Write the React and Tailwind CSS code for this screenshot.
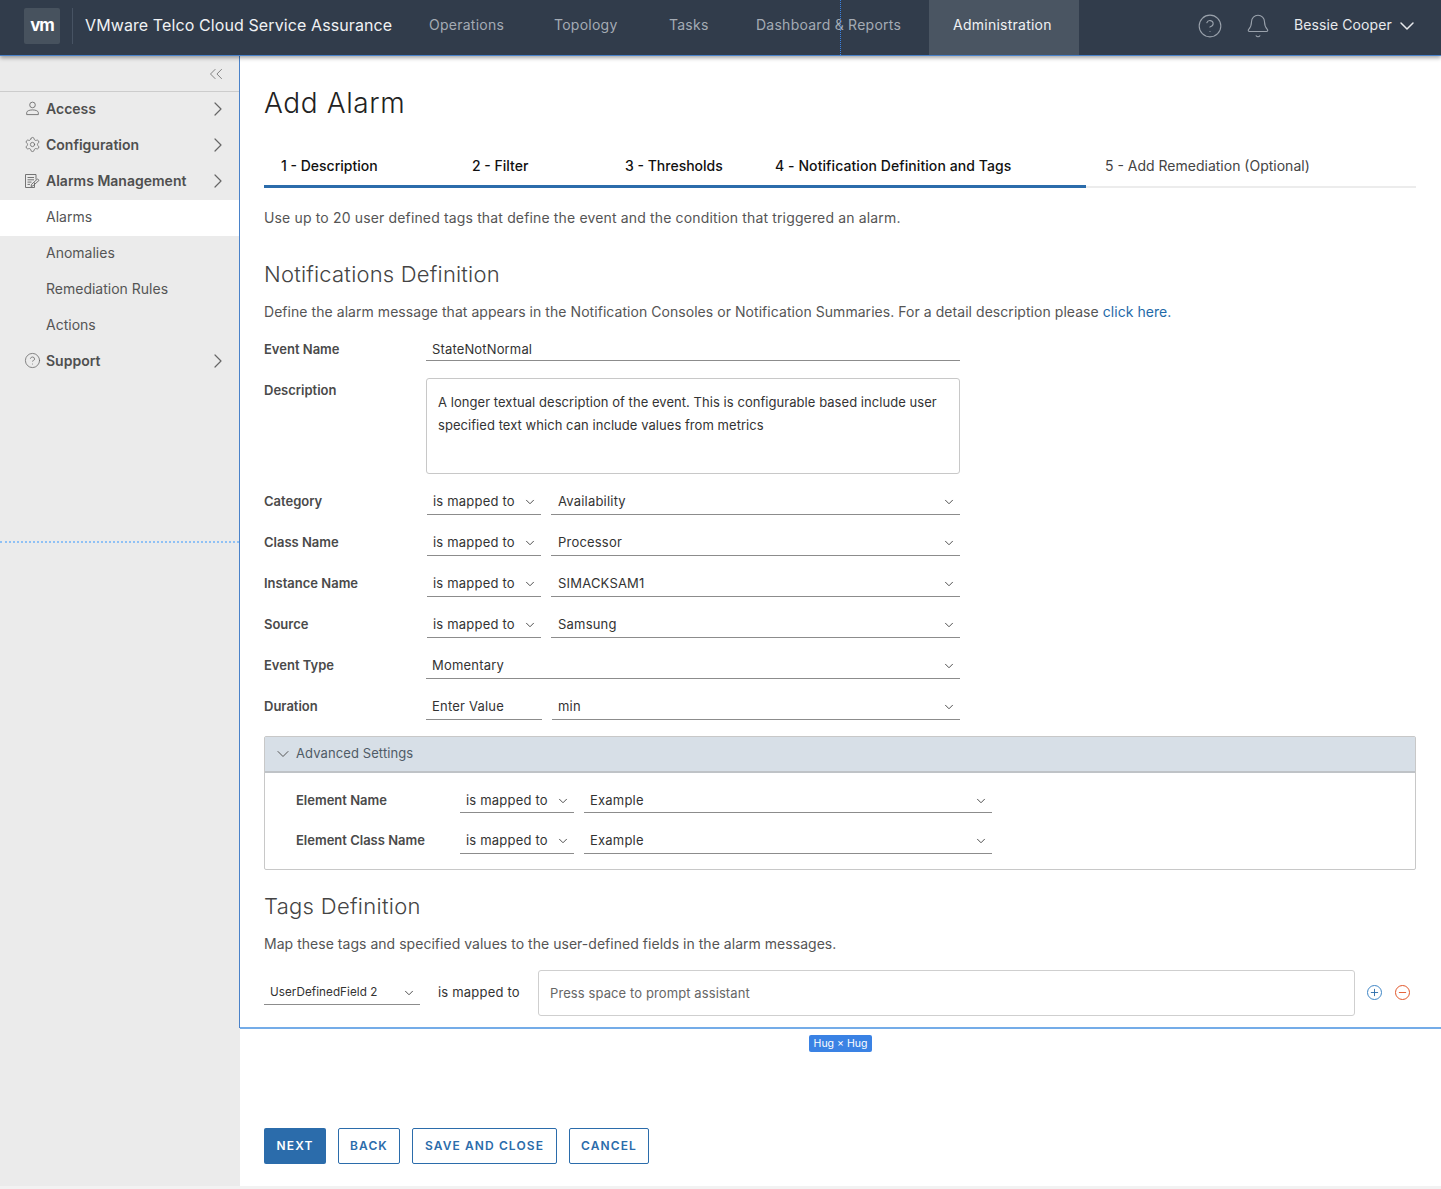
import { ChevronDown, ChevronRight, ChevronsLeft, CircleHelp, Bell, Settings, Plus, Minus } from "lucide-react";

const NAV = ["Operations", "Topology", "Tasks", "Dashboard & Reports"];

const UserIcon = () => (
  <svg viewBox="0 0 16 16" className="w-[15px] h-[15px] text-[#666666]" fill="none" stroke="currentColor" strokeWidth="0.9">
    <circle cx="8" cy="4.2" r="3" />
    <path d="M1.8 14.5v-2.2c0-1.5 2.6-2.8 6.2-2.8s6.2 1.3 6.2 2.8v2.2z" />
  </svg>
);

const AlarmIcon = () => (
  <svg viewBox="0 0 16 16" className="w-[16px] h-[16px] text-[#666666]" fill="none" stroke="currentColor" strokeWidth="0.9">
    <path d="M10.5 9.5v5H1.5V1.5h10.5v5" />
    <path d="M3.5 4.5h6.5M3.5 6.8h6.5M3.5 9.1h4M3.5 11.4h2.5" />
    <path d="M7 13.5l.6-2.2 6-5.4 1.4 1.5-6 5.4z" />
  </svg>
);

const GearIcon = () => <Settings className="w-[17px] h-[17px] text-[#666666]" strokeWidth={1.1} />;
const HelpIcon = () => <CircleHelp className="w-[17px] h-[17px] text-[#666666]" strokeWidth={1.1} />;

const Label = ({ children, className = "w-[162px]" }) => (
  <div className={`${className} shrink-0 text-[13px] font-semibold text-[#4a4a4a]`}>{children}</div>
);

const Select = ({ value, className = "", left = "pl-[6px]", top = "pt-[2px]", text = "text-[13px] tracking-[0.2px]" }) => (
  <div className={`flex items-center justify-between h-[27px] border-b border-[#8c8c8c] ${top} ${left} pr-[4px] text-[#333333] ${text} ${className}`}>
    <span className="whitespace-nowrap">{value}</span>
    <ChevronDown className="w-[14px] h-[14px] shrink-0 text-[#444444]" strokeWidth={1.6} />
  </div>
);

const MappedRow = ({ label, value, labelWidth = "w-[163px]", valueLeft = "pl-[7px]", top, className = "" }) => (
  <div className={`flex items-center ${className}`}>
    <Label className={labelWidth}>{label}</Label>
    <Select value="is mapped to" top={top} className="w-[114px]" />
    <Select value={value} top={top} left={valueLeft} className="ml-[10px] flex-1" />
  </div>
);

const SideItem = ({ icon: Icon, label }) => (
  <div className="flex items-center h-9 pb-[3px] pl-[21px] pr-[9px] text-[#4f4f4f]">
    <div className="flex items-center justify-center w-[22px] shrink-0">
      <Icon />
    </div>
    <span className="ml-[3px] flex-1 text-[14px] font-semibold">{label}</span>
    <ChevronRight className="w-[24px] h-[24px] text-[#666666]" strokeWidth={1.2} />
  </div>
);

const SubItem = ({ label, active }) => (
  <div className={`flex items-center h-9 pb-[4px] pl-[46px] text-[14px] text-[#555555] ${active ? "bg-white" : ""}`}>{label}</div>
);

export default function App() {
  return (
    <div className="relative w-[1441px] h-[1189px] overflow-hidden bg-white font-['Inter','Liberation_Sans',sans-serif] flex flex-col">
      {/* Header */}
      <header className="relative z-10 flex items-center h-[56px] shrink-0 bg-[#313c4b] border-b border-[#4a82c9] shadow-[0_2px_4px_rgba(0,0,0,0.35)]">
        <div className="ml-[24px] mb-[3px] flex items-center justify-center w-[36px] h-[36px] rounded-[2px] bg-[#47525e] text-white text-[17px] font-bold tracking-[-1px]">
          vm
        </div>
        <div className="ml-[12px] mb-[3px] w-px h-[36px] bg-[#475363]" />
        <div className="ml-[12px] mb-[6px] w-[319px] text-[16px] tracking-[0.1px] text-[#f0f2f4] whitespace-nowrap">VMware Telco Cloud Service Assurance</div>
        <nav className="flex h-[55px] items-center text-[14px] tracking-[0.25px]">
          <div className="ml-[25px] w-[125px] pb-[6px] text-[#a4abb4] whitespace-nowrap">{NAV[0]}</div>
          <div className="w-[115px] pb-[6px] text-[#a4abb4] whitespace-nowrap">{NAV[1]}</div>
          <div className="w-[87px] pb-[6px] text-[#a4abb4] whitespace-nowrap">{NAV[2]}</div>
          <div className="w-[173px] pb-[6px] text-[#a4abb4] whitespace-nowrap">{NAV[3]}</div>
          <div className="flex items-center w-[150px] h-full pb-[6px] pl-[24px] bg-[#4a5562] text-[#f0f2f4] whitespace-nowrap">Administration</div>
        </nav>
        <CircleHelp className="ml-[118px] mb-[3px] w-[26px] h-[26px] text-[#9aa2ac]" strokeWidth={1} />
        <Bell className="ml-[22px] mb-[3px] w-[26px] h-[26px] text-[#9aa2ac]" strokeWidth={1} />
        <span className="ml-[23px] mb-[6px] text-[14px] tracking-[0.1px] text-[#e8eaed] whitespace-nowrap">Bessie Cooper</span>
        <ChevronDown className="ml-[3px] mb-[3px] w-[24px] h-[24px] text-[#e8eaed]" strokeWidth={1.5} />
      </header>

      <div className="flex flex-1">
        {/* Sidebar */}
        <aside className="w-[240px] shrink-0 bg-[#ebebeb] border-r border-[#4a82c9] h-[973px] self-start">
          <div className="flex items-center justify-end h-[36px] pr-[12px] border-b border-[#cccccc]">
            <ChevronsLeft className="w-[22px] h-[22px] text-[#777777]" strokeWidth={1} />
          </div>
          <SideItem icon={UserIcon} label="Access" />
          <SideItem icon={GearIcon} label="Configuration" />
          <SideItem icon={AlarmIcon} label="Alarms Management" />
          <SubItem label="Alarms" active />
          <SubItem label="Anomalies" />
          <SubItem label="Remediation Rules" />
          <SubItem label="Actions" />
          <SideItem icon={HelpIcon} label="Support" />
        </aside>

        {/* Main */}
        <main className="flex-1 pl-[24px] pr-[25px] min-w-0">
          <h1 className="mt-[28px] h-[38px] text-[28px] tracking-[0.6px] leading-[38px] font-light text-[#222222]">Add Alarm</h1>

          <div className="mt-[26px] flex h-[40px] border-b-2 border-[#ececec] text-[14px]">
            <div className="flex w-[822px] -mb-[2px] border-b-[3px] border-[#2b6cab] font-medium text-[#111111]">
              <div className="w-[191px] pl-[17px] pt-[7px]">1 - Description</div>
              <div className="w-[153px] pl-[17px] pt-[7px]">2 - Filter</div>
              <div className="w-[150px] pl-[17px] pt-[7px]">3 - Thresholds</div>
              <div className="pl-[17px] pt-[7px] whitespace-nowrap tracking-[0.08px]">4 - Notification Definition and Tags</div>
            </div>
            <div className="pl-[19px] pt-[7px] text-[#444444]">5 - Add Remediation (Optional)</div>
          </div>

          <p className="mt-[20px] text-[14px] tracking-[0.15px] leading-[20px] text-[#555555]">
            Use up to 20 user defined tags that define the event and the condition that triggered an alarm.
          </p>

          <h2 className="mt-[31px] text-[22px] tracking-[0.2px] leading-[30px] font-light text-[#444444]">Notifications Definition</h2>

          <p className="mt-[13px] text-[14px] tracking-[0.05px] leading-[20px] text-[#555555]">
            Define the alarm message that appears in the Notification Consoles or Notification Summaries. For a detail description please{" "}
            <span className="text-[#1f6aa8]">click here.</span>
          </p>

          <div className="w-[696px]">
            <div className="mt-[12px] flex items-center">
              <Label className="w-[162px] pt-[4px]">Event Name</Label>
              <div className="flex-1 h-[27px] border-b border-[#8c8c8c] pt-[6px] pl-[6px] flex items-center text-[13px] tracking-[0.15px] text-[#333333]">StateNotNormal</div>
            </div>

            <div className="mt-[17px] flex items-start">
              <Label className="w-[162px] pt-[3px]">Description</Label>
              <div className="flex-1 h-[96px] rounded-[3px] border border-[#c8c8c8] px-[11px] pt-[12px] text-[13px] tracking-[0.05px] leading-[23px] text-[#333333]">
                A longer textual description of the event. This is configurable based include user specified text which can include values from metrics
              </div>
            </div>

            <MappedRow label="Category" value="Availability" className="mt-[14px]" />
            <MappedRow label="Class Name" value="Processor" className="mt-[14px]" />
            <MappedRow label="Instance Name" value="SIMACKSAM1" className="mt-[14px]" />
            <MappedRow label="Source" value="Samsung" className="mt-[14px]" />

            <div className="mt-[14px] flex items-center">
              <Label>Event Type</Label>
              <Select value="Momentary" className="flex-1" />
            </div>

            <div className="mt-[14px] flex items-center">
              <Label>Duration</Label>
              <div className="w-[116px] h-[27px] border-b border-[#8c8c8c] pt-[2px] pl-[6px] flex items-center text-[13px] tracking-[0.2px] text-[#333333]">Enter Value</div>
              <Select value="min" className="ml-[10px] flex-1" />
            </div>
          </div>

          {/* Advanced settings */}
          <div className="mt-[16px] h-[134px] rounded-[2px] border border-[#c8c8c8]">
            <div className="flex items-center h-[36px] bg-[#d7dfe7] border-b-2 border-[#bfc3c7] pl-[8px] text-[13px] tracking-[0.1px] text-[#4f5b66]">
              <ChevronDown className="w-[20px] h-[20px] text-[#555555]" strokeWidth={1.2} />
              <span className="ml-[3px]">Advanced Settings</span>
            </div>
            <div className="pl-[31px] w-[727px]">
              <MappedRow label="Element Name" value="Example" labelWidth="w-[164px] pt-[2px]" valueLeft="pl-[6px]" top="pt-[4px]" className="mt-[13px]" />
              <MappedRow label="Element Class Name" value="Example" labelWidth="w-[164px]" valueLeft="pl-[6px]" className="mt-[14px]" />
            </div>
          </div>

          <h2 className="mt-[21px] text-[22px] tracking-[0.3px] leading-[30px] font-light text-[#444444]">Tags Definition</h2>

          <p className="mt-[13px] text-[14px] tracking-[0.03px] leading-[20px] text-[#555555]">
            Map these tags and specified values to the user-defined fields in the alarm messages.
          </p>

          <div className="mt-[16px] flex items-center">
            <Select value="UserDefinedField 2" top="pt-[4px]" className="w-[156px] mb-[4px]" text="text-[11.7px] tracking-[0.05px]" />
            <span className="ml-[18px] w-[100px] text-[13px] tracking-[0.2px] text-[#333333] whitespace-nowrap">is mapped to</span>
            <div className="flex items-center w-[817px] h-[46px] rounded-[3px] border border-[#cfcfcf] pt-[2px] pl-[11px] text-[13px] tracking-[0.1px] text-[#666666]">
              Press space to prompt assistant
            </div>
            <div className="ml-[12px] mb-[1px] flex items-center justify-center w-[15px] h-[15px] rounded-full border border-[#3f86c6]">
              <Plus className="w-[11px] h-[11px] text-[#2b6cab]" strokeWidth={2} />
            </div>
            <div className="ml-[13px] mb-[1px] flex items-center justify-center w-[15px] h-[15px] rounded-full border border-[#e2572b]">
              <Minus className="w-[11px] h-[11px] text-[#e2572b]" strokeWidth={2} />
            </div>
          </div>

          <div className="mt-[112px] flex gap-[12px] text-[12px] font-semibold tracking-[1.1px]">
            <button className="w-[62px] h-[36px] rounded-[2px] bg-[#2b6cab] text-white">NEXT</button>
            <button className="w-[62px] h-[36px] rounded-[2px] border border-[#2b6cab] text-[#2b6cab]">BACK</button>
            <button className="w-[145px] h-[36px] rounded-[2px] border border-[#2b6cab] text-[#2b6cab]">SAVE AND CLOSE</button>
            <button className="w-[80px] h-[36px] rounded-[2px] border border-[#2b6cab] text-[#2b6cab]">CANCEL</button>
          </div>
        </main>
      </div>

      {/* Design tool overlays */}
      <div className="absolute left-[840px] top-0 h-[55px] w-0 border-l border-dotted border-[#3a82e4] z-20" />
      <div className="absolute left-0 top-[541px] w-[239px] h-0 border-t-2 border-dotted border-[#8fc1f5] z-20" />
      <div className="absolute left-[240px] right-0 top-[1027px] h-[2px] bg-[#74ace8]" />
      <div className="absolute left-[809px] top-[1035px] h-[17px] w-[63px] flex items-center justify-center rounded-[2px] bg-[#3a82e4] text-[10.5px] text-white whitespace-nowrap">Hug × Hug</div>
      <div className="absolute left-0 w-[240px] top-[1028px] bottom-0 bg-[#ebebeb]" />
      <div className="absolute left-0 right-0 bottom-0 h-[3px] bg-[#f2f2f2]" />
    </div>
  );
}
